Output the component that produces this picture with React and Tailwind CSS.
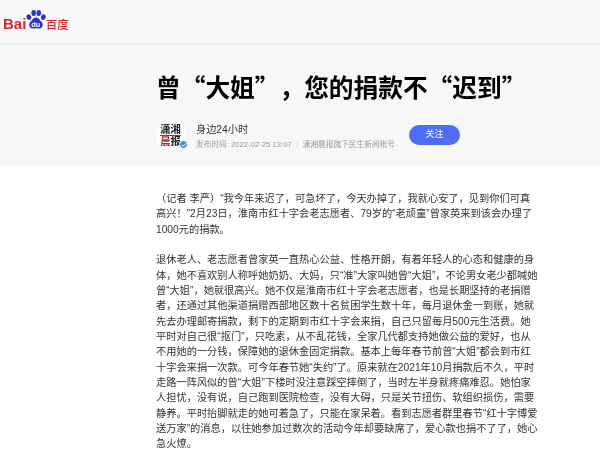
import React from "react";
import { Check } from "lucide-react";

const body = '"Liberation Sans", "Noto Sans CJK SC", sans-serif';

const paragraphs = [
  "（记者 李严）“我今年来迟了，可急坏了，今天办掉了，我就心安了，见到你们可真高兴！”2月23日，淮南市红十字会老志愿者、79岁的“老顽童”曾家英来到该会办理了1000元的捐款。",
  "退休老人、老志愿者曾家英一直热心公益、性格开朗，有着年轻人的心态和健康的身体，她不喜欢别人称呼她奶奶、大妈，只“准”大家叫她曾“大姐”，不论男女老少都喊她曾“大姐”，她就很高兴。她不仅是淮南市红十字会老志愿者，也是长期坚持的老捐赠者，还通过其他渠道捐赠西部地区数十名贫困学生数十年，每月退休金一到账，她就先去办理邮寄捐款，剩下的定期到市红十字会来捐，自己只留每月500元生活费。她平时对自己很“抠门”，只吃素，从不乱花钱，全家几代都支持她做公益的爱好，也从不用她的一分钱，保障她的退休金固定捐款。基本上每年春节前曾“大姐”都会到市红十字会来捐一次款。可今年春节她“失约”了。原来就在2021年10月捐款后不久，平时走路一阵风似的曾“大姐”下楼时没注意踩空摔倒了，当时左半身就疼痛难忍。她怕家人担忧，没有说，自己跑到医院检查，没有大碍，只是关节扭伤、软组织损伤，需要静养。平时抬脚就走的她可着急了，只能在家呆着。看到志愿者群里春节“红十字博爱送万家”的消息，以往她参加过数次的活动今年却要缺席了，爱心款也捐不了了，她心急火燎。",
];

function Logo() {
  return (
    <div className="flex items-end h-[22px]">
      <span className="font-['Liberation_Sans',sans-serif] font-bold text-[15px] leading-[14px] text-[#d8262c]">Bai</span>
      <div className="relative w-[20px] h-[22px] ml-[-0.5px]">
        <svg viewBox="0 0 21 22" className="absolute inset-0 w-full h-full" fill="#2932c4">
          <ellipse cx="3" cy="8" rx="2.4" ry="3" transform="rotate(-20 3 8)" />
          <ellipse cx="8" cy="3.6" rx="2.4" ry="3.2" />
          <ellipse cx="13.4" cy="3.6" rx="2.4" ry="3.2" />
          <ellipse cx="18.2" cy="8" rx="2.4" ry="3" transform="rotate(20 18.2 8)" />
          <path d="M10.5 8.5c-3 0-3.6 3-6 4.6-2 1.5-1.6 6.9 3 6.9 1.3 0 2-.4 3-.4s1.8.4 3 .4c4.6 0 5-5.4 3-6.9-2.4-1.6-3-4.6-6-4.6z" />
        </svg>
        <span className="absolute left-0 right-0 top-[12px] text-center font-['Liberation_Sans',sans-serif] font-bold text-[7.5px] leading-[8px] text-white">du</span>
      </div>
      <span className="font-['Noto_Sans_CJK_SC',sans-serif] font-medium text-[11.5px] leading-[14px] text-[#d8262c]">百度</span>
    </div>
  );
}

function Avatar() {
  return (
    <div className="relative shrink-0 w-[29px] h-[30px] rounded-full bg-white flex flex-col items-center justify-center font-['Liberation_Sans','Noto_Sans_CJK_SC',sans-serif] font-bold text-[10.3px] leading-[11px]">
      <span className="text-[#222] border-b border-[#555]">潇湘</span>
      <span className="text-[#222]"><span className="text-[#a33b3b]">晨</span>报</span>
      <div className="absolute right-[-3px] bottom-[1px] w-[9px] h-[9px] rounded-full bg-[#3f8fd0] border border-white flex items-center justify-center">
        <Check size={6} color="white" strokeWidth={4} />
      </div>
    </div>
  );
}

export default function App() {
  return (
    <div className="w-[600px] h-[459px] overflow-hidden bg-white blur-[0.3px]" style={{ fontFamily: body }}>
      <header className="h-[43px] bg-[#f8f8f8] shadow-[0_1px_3px_rgba(0,0,0,0.08)] relative pl-[3px] pt-[9px]">
        <Logo />
      </header>

      <div className="h-[123px] bg-[#f7f7f7] px-[156px] pt-[25px]">
        <h1 className="font-['Noto_Sans_CJK_SC',sans-serif] font-bold text-[24.7px] leading-[36px] text-black whitespace-nowrap [text-spacing-trim:space-all]">
          曾“大姐”，您的捐款不“迟到”
        </h1>
        <div className="flex items-start mt-[16px] w-[304px]">
          <Avatar />
          <div className="ml-[11px] flex-1">
            <div className="text-[10.2px] leading-[14px] mt-[3px] text-[#333]">身边24小时</div>
            <div className="flex items-center mt-[2px] text-[7.7px] leading-[12px] text-[#9a9a9a] whitespace-nowrap">
              <span>发布时间: 2022-02-25 13:07</span>
              <span className="w-px h-[8px] bg-[#e5e5e5] mx-[5px]" />
              <span>潇湘晨报旗下民生新闻帐号</span>
            </div>
          </div>
          <button className="shrink-0 w-[51px] h-[20px] mt-[5px] rounded-full bg-[#4e6ef2] text-white text-[9px]">关注</button>
        </div>
      </div>

      <main className="pl-[156px] w-[540px] pt-[25px] text-[10.22px] leading-[15.33px] text-[#333] [text-spacing-trim:space-all]">
        {paragraphs.map((p, i) => (
          <p key={i} className="mb-[15.33px]">{p}</p>
        ))}
      </main>
    </div>
  );
}
